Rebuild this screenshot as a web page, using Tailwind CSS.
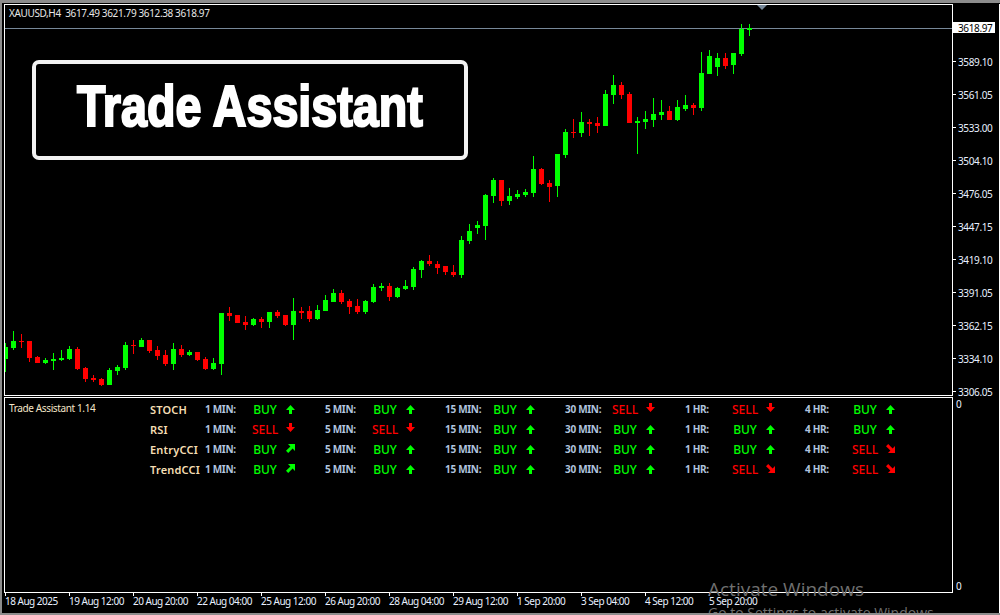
<!DOCTYPE html>
<html lang="en">
<head>
    <meta charset="UTF-8">
    <meta name="viewport" content="width=device-width, initial-scale=1.0">
    <title>Trade Assistant</title>
    <script src="https://cdn.jsdelivr.net/npm/@tailwindcss/browser@4"></script>
</head>
<body class="bg-black">
    <div class="relative w-[1000px] h-[615px] overflow-hidden bg-black flex flex-col font-['Noto_Sans',sans-serif] text-[10px] tracking-[-0.37px] leading-none">
        <div class="h-[3px] shrink-0 bg-[#8c8c8c]"></div>

        <div class="flex flex-1 pt-px pl-[4px]">
            <!-- chart column -->
            <div class="w-[949px] flex flex-col">
                <div class="relative h-[392px] border border-white">
                    <svg id="chart" class="absolute left-0 top-0" width="947" height="390" viewBox="5 5 947 390"></svg>
                    <div class="relative h-[55px] pl-[4px] pt-[3px] text-[#e8e8e8] whitespace-pre">XAUUSD,H4  3617.49 3621.79 3612.38 3618.97</div>
                    <div class="relative ml-[27px] w-[436px] h-[100px] pb-[9px] border-[4px] border-[#f2f2f2] rounded-[7px] bg-black flex items-center justify-center">
                        <span class="inline-block scale-x-[0.805] tracking-normal font-['Liberation_Sans',sans-serif] font-bold text-[58px] text-white whitespace-nowrap [-webkit-text-stroke:2.2px_white]">Trade Assistant</span>
                    </div>
                </div>
                <div class="mt-px h-[196px] border border-white flex pt-px">
                    <div class="w-[145px] pl-[4px] pt-[4px] text-[#f5e6c8]">Trade Assistant 1.14</div>
                    <div id="signals" class="flex flex-col"></div>
                </div>
                <div id="timeAxis" class="flex tracking-[-0.5px] text-[#e8f0ff]"></div>
            </div>

            <!-- price column -->
            <div class="relative w-[46px] flex flex-col">
                <div id="priceAxis" class="pt-[7px] flex flex-col text-[#e8f0ff]"></div>
                <div class="absolute left-[3px] top-[395px] text-[#e8f0ff]">0</div>
                <div class="absolute left-[3px] top-[577px] text-[#e8f0ff]">0</div>
            </div>
            <div class="w-px bg-white"></div>
        </div>

        <!-- windows watermark -->
        <div class="absolute left-[708px] top-[580px] text-[#6f6f6f] tracking-normal font-['Open_Sans',sans-serif] text-[19px] whitespace-nowrap">Activate Windows</div>
        <div class="absolute left-[708px] top-[606px] text-[#6f6f6f] tracking-normal font-['Open_Sans',sans-serif] text-[14px] whitespace-nowrap">Go to Settings to activate Windows.</div>

        <div class="relative z-10 h-[2px] shrink-0 bg-[#8c8c8c]"></div>
        <div class="absolute left-0 top-0 bottom-0 w-[2px] bg-[#8c8c8c]"></div>
    </div>

    <script>
        // [high, bodyTop, bodyBottom, low, color] in page pixels, one candle every 8px from x=5
        const candles = [
            [343,347,359,372,'g'],[331,341,348,350,'g'],[334,341,342,348,'r'],[341,341,358,362,'r'],[356,357,363,363,'r'],
            [358,360,363,364,'g'],[353,359,361,370,'g'],[350,358,360,361,'g'],[346,349,359,360,'g'],[347,349,369,370,'r'],
            [367,368,379,382,'r'],[375,378,380,382,'r'],[378,379,385,386,'r'],[368,370,385,385,'g'],[365,367,371,375,'g'],
            [342,345,368,370,'g'],[340,345,346,354,'r'],[338,340,347,347,'g'],[340,340,351,353,'r'],[346,350,356,360,'r'],
            [350,355,364,366,'r'],[343,349,364,370,'g'],[345,349,355,357,'r'],[350,352,355,356,'g'],[352,352,360,361,'r'],
            [357,359,369,370,'r'],[358,363,369,370,'g'],[313,313,364,375,'g'],[307,313,316,321,'r'],[315,315,323,323,'r'],
            [316,322,325,330,'r'],[318,319,325,326,'g'],[317,319,322,328,'r'],[312,312,322,328,'g'],[310,312,316,318,'r'],
            [315,315,325,326,'r'],[298,311,325,340,'g'],[307,311,313,319,'r'],[306,311,319,322,'r'],[305,310,319,320,'g'],
            [295,300,311,311,'g'],[289,293,302,302,'g'],[290,293,302,304,'r'],[299,301,307,314,'r'],[299,306,312,314,'r'],
            [300,301,312,314,'g'],[284,287,302,303,'g'],[283,286,288,291,'g'],[283,286,297,301,'r'],[287,288,297,298,'g'],
            [280,286,289,290,'g'],[267,269,287,290,'g'],[260,261,270,278,'g'],[255,261,264,266,'r'],[261,264,268,274,'r'],
            [266,266,272,275,'r'],[265,272,275,277,'r'],[236,240,275,278,'g'],[224,231,241,244,'g'],[221,225,228,234,'g'],
            [194,195,226,240,'g'],[178,180,196,203,'g'],[180,180,201,206,'r'],[188,196,201,205,'g'],[190,194,197,199,'g'],
            [189,192,195,197,'g'],[156,169,193,197,'g'],[168,169,184,185,'r'],[180,183,187,202,'r'],[154,154,186,197,'g'],
            [129,132,155,158,'g'],[119,132,133,138,'r'],[112,122,133,137,'g'],[119,122,124,136,'r'],[117,123,126,133,'r'],
            [90,94,126,126,'g'],[75,85,95,104,'g'],[82,85,95,99,'r'],[92,94,123,123,'r'],[117,121,123,154,'g'],
            [111,119,122,129,'g'],[98,114,120,127,'g'],[100,112,115,120,'g'],[106,111,120,120,'r'],[100,107,120,121,'g'],
            [95,105,109,111,'g'],[103,105,108,115,'r'],[52,73,108,111,'g'],[50,56,74,74,'g'],[53,58,67,76,'g'],
            [53,58,66,69,'r'],[53,53,65,74,'g'],[24,29,54,56,'g'],[24,28,30,36,'g']
        ];

        let chartSvg = '<rect x="5" y="28" width="947" height="1" fill="#778899"/>';
        chartSvg += '<polygon points="757,5 767,5 762,10" fill="#778899"/>';
        candles.forEach((c, k) => {
            const x = 5 + 8 * k;
            const color = c[4] === 'g' ? '#00ff00' : '#ff0000';
            chartSvg += `<rect x="${x}" y="${c[0]}" width="1" height="${c[3] - c[0]}" fill="${color}"/>`;
            chartSvg += `<rect x="${x - 2}" y="${c[1]}" width="5" height="${c[2] - c[1]}" fill="${color}"/>`;
        });
        document.getElementById('chart').innerHTML = chartSvg;

        // Price axis
        const prices = ['3618.97','3589.10','3561.05','3533.00','3504.10','3476.05','3447.15','3419.10','3391.05','3362.15','3334.10','3306.05'];
        document.getElementById('priceAxis').innerHTML = prices.map((p, i) => i === 0
            ? `<div class="h-[33px] mb-px flex items-center"><span class="w-[42px] h-[11px] bg-white text-black pl-[5px] flex items-center">${p}</span></div>`
            : `<div class="h-[33px] flex items-center"><span class="w-[3px] h-px bg-white"></span><span class="ml-[2px]">${p}</span></div>`
        ).join('');

        // Time axis
        const times = ['18 Aug 2025','19 Aug 12:00','20 Aug 20:00','22 Aug 04:00','25 Aug 12:00','26 Aug 20:00','28 Aug 04:00','29 Aug 12:00','1 Sep 20:00','3 Sep 04:00','4 Sep 12:00','5 Sep 20:00'];
        document.getElementById('timeAxis').innerHTML = times.map(t => `
            <div class="w-[64px] shrink-0 pl-px">
                <div class="w-px h-[3px] bg-white"></div>
                <div class="whitespace-nowrap">${t}</div>
            </div>`).join('');

        // Signal table
        const arrows = {
            up: '4.5,0 9,5 6,5 6,9 3,9 3,5 0,5',
            down: '4.5,9 9,4 6,4 6,0 3,0 3,4 0,4',
            ne: '9,0 9,7 6.6,4.6 2.2,9 0,6.8 4.4,2.4 2,0',
            se: '9,9 2,9 4.4,6.6 0,2.2 2.2,0 6.6,4.4 9,2'
        };
        const periods = ['1 MIN:','5 MIN:','15 MIN:','30 MIN:','1 HR:','4 HR:'];
        const rows = [
            ['STOCH', ['B','up'],['B','up'],['B','up'],['S','down'],['S','down'],['B','up']],
            ['RSI', ['S','down'],['S','down'],['B','up'],['B','up'],['B','up'],['B','up']],
            ['EntryCCI', ['B','ne'],['B','up'],['B','up'],['B','up'],['B','up'],['S','se']],
            ['TrendCCI', ['B','ne'],['B','up'],['B','up'],['B','up'],['S','se'],['S','se']]
        ];
        document.getElementById('signals').innerHTML = rows.map(row => `
            <div class="h-[20px] flex items-center">
                <div class="w-[55px] text-[11px] tracking-[0.2px] font-semibold text-[#f5deb3] whitespace-nowrap">${row[0]}</div>
                ${periods.map((label, i) => {
                    const cell = row[i + 1];
                    const buy = cell[0] === 'B';
                    const fill = buy ? '#00ff00' : '#ff0000';
                    const shift = cell[1] === 'up' ? '' : (cell[1] === 'down' ? '-translate-y-0.5' : '-translate-y-px');
                    return `<div class="w-[120px] flex items-center">
                        <span class="w-[45px] font-bold tracking-[-0.3px] text-[#b0c4de] whitespace-nowrap">${label}</span>
                        <span class="w-[30px] translate-y-px text-center text-[12px] tracking-normal font-medium whitespace-nowrap ${buy ? 'text-[#00ff00]' : 'text-[#ff0000]'}">${buy ? 'BUY' : 'SELL'}</span>
                        <span class="w-[20px] flex justify-center ${shift}"><svg width="9" height="9" viewBox="0 0 9 9"><polygon points="${arrows[cell[1]]}" fill="${fill}"/></svg></span>
                    </div>`;
                }).join('')}
            </div>`).join('');
    </script>
</body>
</html>
